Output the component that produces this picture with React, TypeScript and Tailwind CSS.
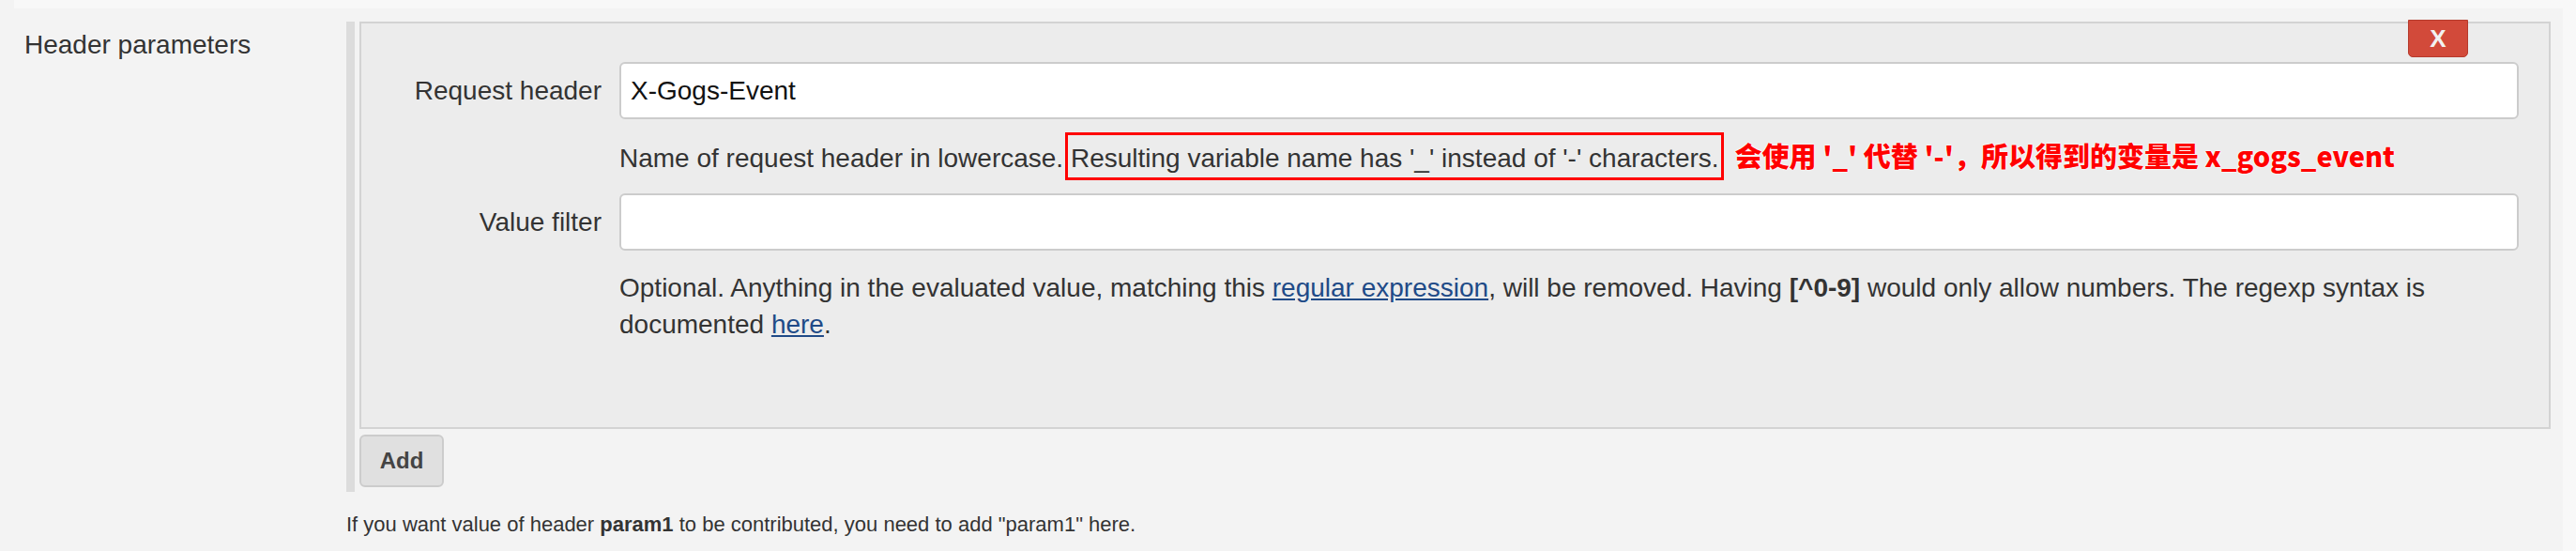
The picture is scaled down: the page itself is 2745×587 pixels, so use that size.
export default function App() {
  return (
    <div className="w-[2745px] h-[587px] bg-[#f8f8f8] font-['Liberation_Sans',Arial,sans-serif] text-[#333] overflow-hidden">
      <div className="w-[2731px] h-full bg-[#f3f3f3]">
        <div className="ml-[15px] h-[9px] bg-[#f8f8f8]" />
        <div className="flex pt-[14px]">
          <div className="w-[369px] shrink-0 pl-[26px] pt-[5px] text-[28px] leading-[1.4]">
            Header parameters
          </div>
          <div className="flex-1 mr-[13px]">
            <div className="flex">
              <div className="w-[9px] shrink-0 bg-[#dcdcdc]" />
              <div className="ml-[5px] flex-1 pb-[5px]">
                <div className="relative border-2 border-[#d3d3d3] bg-[#ececec] pt-[41px] pr-[32px] pb-[90px] text-[28px] leading-[1.4]">
                  <button className="absolute -top-[4px] right-[86px] w-[64px] h-[40px] bg-[#d24a3a] border border-[#b63a2c] rounded-b-[5px] text-[#f2f2f2] text-[26px] font-bold leading-none flex items-center justify-center">
                    X
                  </button>
                  <div className="flex items-center">
                    <div className="w-[256px] shrink-0 text-right">Request header</div>
                    <div className="ml-[19px] flex-1 h-[61px] bg-white border-2 border-[#ccc] rounded-[6px] pl-[10px] flex items-center text-[#111]">
                      X-Gogs-Event
                    </div>
                  </div>
                  <div className="ml-[275px] mt-[22px] h-[39px] whitespace-nowrap">
                    Name of request header in lowercase.{" "}
                    <span className="border-[3px] border-[#ff0000] pt-[9px] pb-[5px] pl-[3px] pr-[2px] -ml-[6px] -mr-[5px]">
                      Resulting variable name has '_' instead of '-' characters.
                    </span>
                    <span className="ml-[17px] leading-none font-['Noto_Sans_CJK_SC',sans-serif] font-black text-[29px] text-[#ff0000] [text-shadow:0_0_2px_#fff,0_0_2px_#fff,0_0_1px_#fff]">
                      会使用 '_' 代替 '-'，所以得到的变量是 x_gogs_event
                    </span>
                  </div>
                  <div className="flex items-center mt-[18px]">
                    <div className="w-[256px] shrink-0 text-right">Value filter</div>
                    <div className="ml-[19px] flex-1 h-[61px] bg-white border-2 border-[#ccc] rounded-[6px]" />
                  </div>
                  <div className="ml-[275px] mt-[20px]">
                    Optional. Anything in the evaluated value, matching this{" "}
                    <a className="text-[#204a87] underline">regular expression</a>, will be removed. Having{" "}
                    <b>[^0-9]</b> would only allow numbers. The regexp syntax is documented{" "}
                    <a className="text-[#204a87] underline">here</a>.
                  </div>
                </div>
                <button className="mt-[6px] w-[90px] h-[56px] bg-[#e0e0e0] border-2 border-[#ccc] rounded-[6px] text-[24px] font-bold text-[#444]">
                  Add
                </button>
              </div>
            </div>
            <div className="mt-[20px] text-[22px] leading-[1.4]">
              If you want value of header <b>param1</b> to be contributed, you need to add "param1" here.
            </div>
          </div>
        </div>
      </div>
    </div>
  );
}
